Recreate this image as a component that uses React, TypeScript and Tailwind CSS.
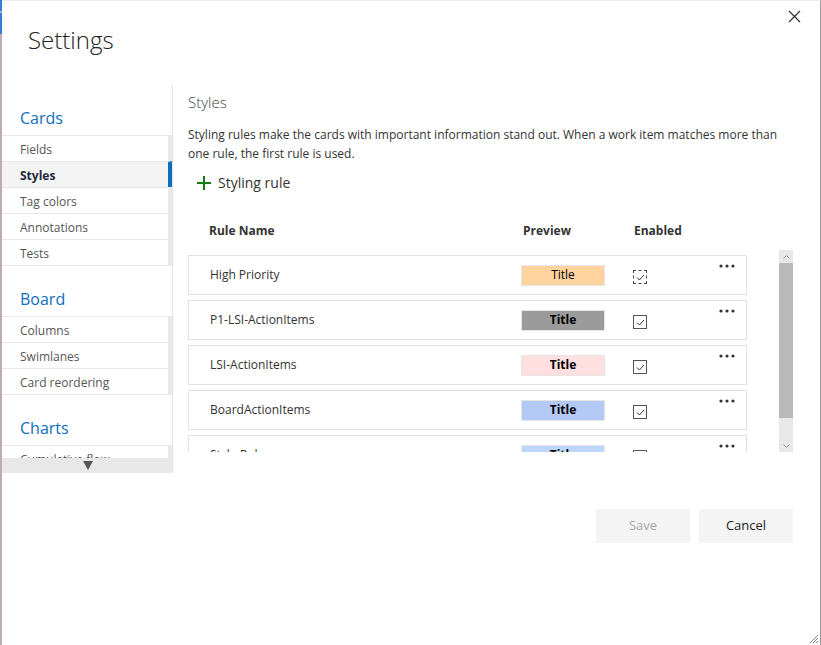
import { useState } from 'react'

const font = { fontFamily: '"Open Sans", "Noto Sans", sans-serif' }

const navGroups = [
  { title: 'Cards', items: ['Fields', 'Styles', 'Tag colors', 'Annotations', 'Tests'] },
  { title: 'Board', items: ['Columns', 'Swimlanes', 'Card reordering'] },
  { title: 'Charts', items: ['Cumulative flow'] },
]

const rules = [
  { name: 'High Priority', color: 'bg-[#ffd29e]', bold: false, focus: true },
  { name: 'P1-LSI-ActionItems', color: 'bg-[#9b9b9b]', bold: true, focus: false },
  { name: 'LSI-ActionItems', color: 'bg-[#ffdfe0]', bold: true, focus: false },
  { name: 'BoardActionItems', color: 'bg-[#b3c9f5]', bold: true, focus: false },
  { name: 'Style Rule', color: 'bg-[#bcd7fa]', bold: true, focus: false },
]

function Dots() {
  return (
    <svg width="16" height="4" viewBox="0 0 16 4" className="text-[#333]">
      <circle cx="2" cy="2" r="1.6" fill="currentColor" />
      <circle cx="8" cy="2" r="1.6" fill="currentColor" />
      <circle cx="14" cy="2" r="1.6" fill="currentColor" />
    </svg>
  )
}

function Check({ focus }: { focus: boolean }) {
  return (
    <div
      className={
        focus
          ? 'flex h-[14px] w-[14px] items-center justify-center border border-dashed border-[#444] bg-white'
          : 'flex h-[14px] w-[14px] items-center justify-center border border-[#555] bg-white'
      }
    >
      <svg width="9" height="7" viewBox="0 0 9 7">
        <path d="M1 3.5 L3.4 6 L8 1" fill="none" stroke="#333" strokeWidth="1" />
      </svg>
    </div>
  )
}

export default function App() {
  const [active, setActive] = useState('Styles')

  return (
    <div className="flex h-[645px] w-[821px] overflow-hidden bg-white" style={font}>
      <div className="flex w-[2px] flex-col bg-[#bcaeae]">
        <div className="h-[11px] bg-[#3b7dd0]" />
        <div className="h-[2px] bg-[#9db6d4]" />
        <div className="h-[21px] bg-[#3b7dd0]" />
      </div>

      <div className="flex flex-1 flex-col border-r border-t border-r-[#9a9a9a] border-t-[#ececec]">
        <div className="flex h-[84px] items-start justify-between">
          <h1 className="pl-[26px] pt-[23px] text-[24px] font-light leading-[32px] text-[#222]">Settings</h1>
          <button type="button" className="mr-[19px] mt-[9px] p-0">
            <svg width="13" height="13" viewBox="0 0 13 13">
              <path d="M1 1 L12 12 M12 1 L1 12" stroke="#333" strokeWidth="1.2" />
            </svg>
          </button>
        </div>

        <div className="flex h-[388px]">
          <div className="flex w-[171px] flex-col border-r border-[#e3e3e3]">
            <div className="h-[373px] overflow-hidden">
              {navGroups.map((group) => (
                <div key={group.title}>
                  <div className="flex h-[50px] items-end pb-[6px] pl-[18px] text-[16px] leading-[22px] text-[#106ebe]">
                    {group.title}
                  </div>
                  <div className="border-b border-[#e8e8e8]">
                    {group.items.map((item) => {
                      const isActive = item === active
                      return (
                        <button
                          key={item}
                          type="button"
                          onClick={() => setActive(item)}
                          className={
                            isActive
                              ? 'flex h-[26px] w-full items-center border-r-4 border-t border-r-[#106ebe] border-t-[#e8e8e8] bg-[#f4f4f4] pl-[18px] pt-[2px] text-left text-[12px] font-bold text-[#1f2a3a]'
                              : 'flex h-[26px] w-full items-center border-r-4 border-t border-r-[#e8e8e8] border-t-[#e8e8e8] bg-white pl-[18px] pt-[2px] text-left text-[12px] text-[#555]'
                          }
                        >
                          {item}
                        </button>
                      )
                    })}
                  </div>
                </div>
              ))}
            </div>
            <div className="flex h-[15px] items-center justify-center bg-[#e8e8e8] pl-[2px]">
              <svg width="10" height="9" viewBox="0 0 10 9">
                <path d="M0 0 H10 L5 9 Z" fill="#555" />
              </svg>
            </div>
          </div>

          <div className="flex-1 pl-[15px] pt-[6px]">
            <h2 className="text-[15px] font-light leading-[22px] text-[#444]">Styles</h2>
            <p className="mt-[12px] w-[600px] text-[12px] leading-[19px] text-[#333]">
              Styling rules make the cards with important information stand out. When a work item matches more than
              one rule, the first rule is used.
            </p>
            <button type="button" className="mt-[10px] flex items-center gap-[6px] pl-[8px]">
              <svg width="16" height="16" viewBox="0 0 16 16">
                <path d="M8 1 V15 M1 8 H15" stroke="#107c10" strokeWidth="2" />
              </svg>
              <span className="text-[14px] leading-[20px] text-[#333]">Styling rule</span>
            </button>

            <div className="mt-[28px] flex h-[20px] items-center text-[12px] font-bold text-[#333]">
              <div className="w-[335px] pl-[21px]">Rule Name</div>
              <div className="w-[111px]">Preview</div>
              <div>Enabled</div>
            </div>

            <div className="mt-[9px] flex h-[202px]">
              <div className="w-[559px] overflow-hidden pt-[5px]">
                {rules.map((rule) => (
                  <div key={rule.name} className="mb-[5px] flex h-[40px] border border-[#e3e3e3] bg-white">
                    <div className="flex w-[332px] items-center pl-[21px] text-[12px] text-[#333]">{rule.name}</div>
                    <div className="flex items-center">
                      <div
                        className={`flex h-[21px] w-[84px] items-center justify-center border border-[#e6e6e6] text-[12px] text-black ${rule.color} ${rule.bold ? 'font-bold' : ''}`}
                      >
                        Title
                      </div>
                    </div>
                    <div className="ml-[28px] mt-[14px]">
                      <Check focus={rule.focus} />
                    </div>
                    <div className="ml-[72px] mt-[8px]">
                      <Dots />
                    </div>
                  </div>
                ))}
              </div>
              <div className="ml-[32px] flex w-[14px] flex-col bg-[#e8e8e8]">
                <div className="flex h-[13px] items-center justify-center">
                  <svg width="7" height="4" viewBox="0 0 7 4">
                    <path d="M0.5 3.5 L3.5 0.5 L6.5 3.5" fill="none" stroke="#999" strokeWidth="1" />
                  </svg>
                </div>
                <div className="h-[155px] bg-[#b9b9b9]" />
                <div className="flex flex-1 items-end justify-center pb-[4px]">
                  <svg width="7" height="4" viewBox="0 0 7 4">
                    <path d="M0.5 0.5 L3.5 3.5 L6.5 0.5" fill="none" stroke="#999" strokeWidth="1" />
                  </svg>
                </div>
              </div>
            </div>
          </div>
        </div>

        <div className="mt-[36px] flex justify-end gap-[9px] pr-[27px]">
          <button type="button" className="h-[34px] w-[94px] bg-[#f4f4f4] text-[13px] text-[#a6a6a6]">
            Save
          </button>
          <button type="button" className="h-[34px] w-[94px] bg-[#f4f4f4] text-[13px] text-[#222]">
            Cancel
          </button>
        </div>

        <div className="mt-auto flex justify-end pb-[1px] pr-[1px]">
          <svg width="11" height="11" viewBox="0 0 11 11">
            <path d="M10 2 L2 10 M10 5 L5 10 M10 8 L8 10" stroke="#888" strokeWidth="1" />
          </svg>
        </div>
      </div>
    </div>
  )
}
